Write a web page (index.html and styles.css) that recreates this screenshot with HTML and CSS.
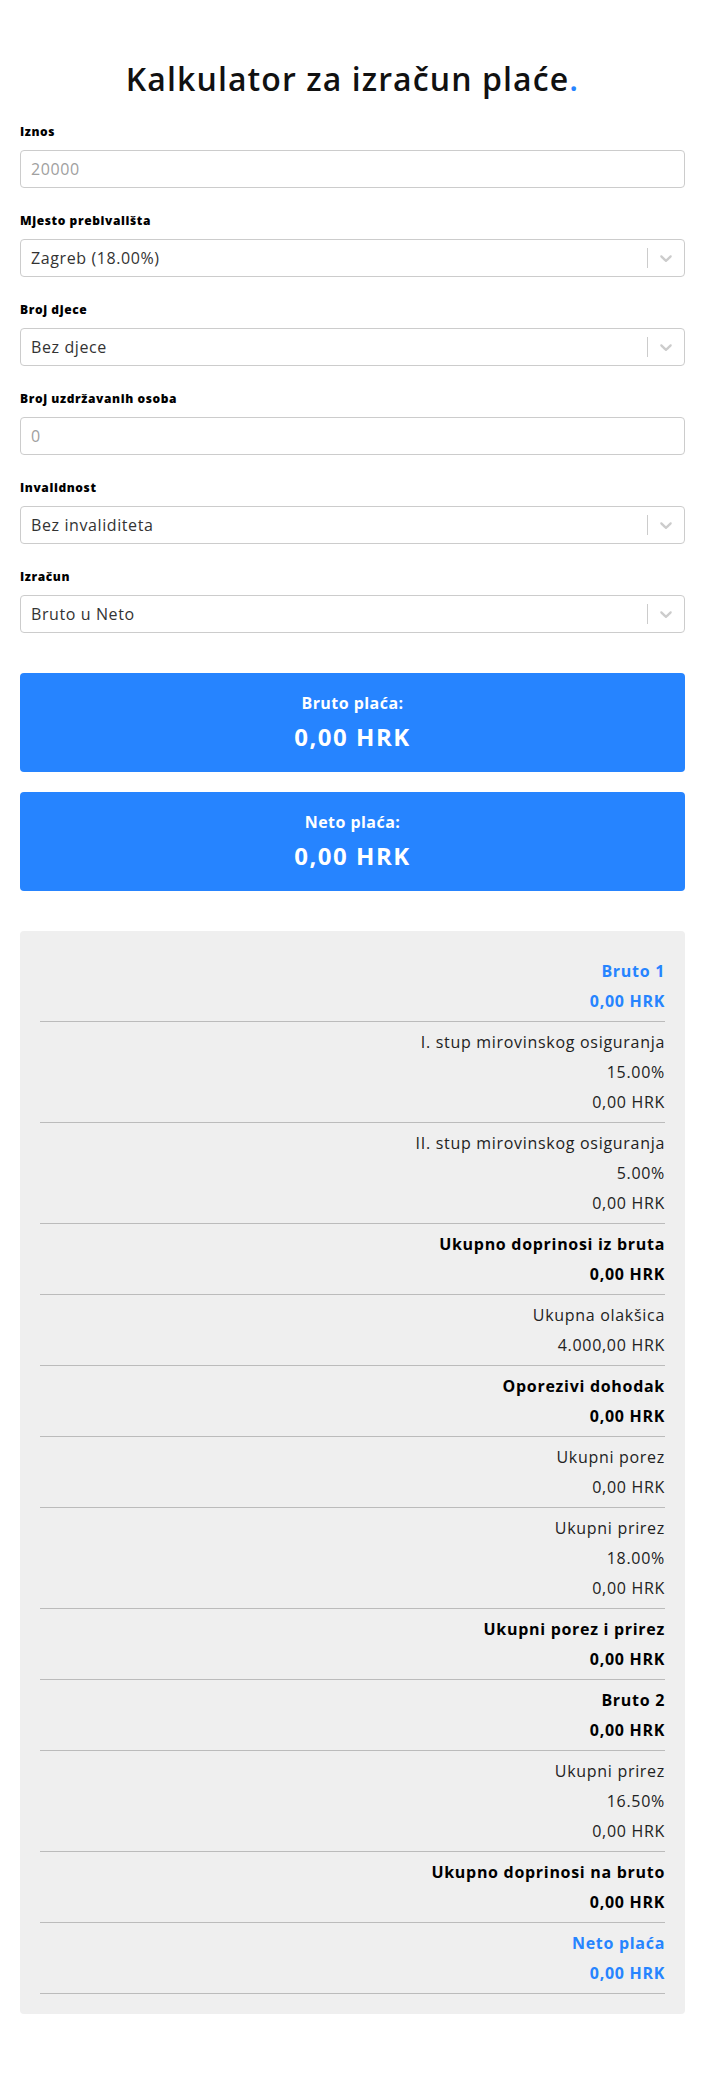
FILE: index.html
```html
<!DOCTYPE html>
<html lang="hr">
<head>
<meta charset="utf-8">
<title>Kalkulator za izračun plaće</title>
<link rel="stylesheet" href="styles.css">
</head>
<body>
<div class="page">
  <h1 class="title">Kalkulator za izračun plaće<span class="dot">.</span></h1>

  <div class="form">
    <div class="field">
      <div class="label">Iznos</div>
      <div class="control"><span class="placeholder">20000</span></div>
    </div>
    <div class="field">
      <div class="label">Mjesto prebivališta</div>
      <div class="control select">
        <span class="value">Zagreb (18.00%)</span>
        <span class="indicators"><span class="sep"></span><span class="chev"><svg viewBox="0 0 20 20" width="20" height="20"><path d="M4.516 7.548c0.436-0.446 1.043-0.481 1.576 0l3.908 3.747 3.908-3.747c0.533-0.481 1.141-0.446 1.574 0 0.436 0.445 0.408 1.197 0 1.615-0.406 0.418-4.695 4.502-4.695 4.502-0.217 0.223-0.502 0.335-0.787 0.335s-0.57-0.112-0.789-0.335c0 0-4.287-4.084-4.695-4.502s-0.436-1.17 0-1.615z"/></svg></span></span>
      </div>
    </div>
    <div class="field">
      <div class="label">Broj djece</div>
      <div class="control select">
        <span class="value">Bez djece</span>
        <span class="indicators"><span class="sep"></span><span class="chev"><svg viewBox="0 0 20 20" width="20" height="20"><path d="M4.516 7.548c0.436-0.446 1.043-0.481 1.576 0l3.908 3.747 3.908-3.747c0.533-0.481 1.141-0.446 1.574 0 0.436 0.445 0.408 1.197 0 1.615-0.406 0.418-4.695 4.502-4.695 4.502-0.217 0.223-0.502 0.335-0.787 0.335s-0.57-0.112-0.789-0.335c0 0-4.287-4.084-4.695-4.502s-0.436-1.17 0-1.615z"/></svg></span></span>
      </div>
    </div>
    <div class="field">
      <div class="label">Broj uzdržavanih osoba</div>
      <div class="control"><span class="placeholder">0</span></div>
    </div>
    <div class="field">
      <div class="label">Invalidnost</div>
      <div class="control select">
        <span class="value">Bez invaliditeta</span>
        <span class="indicators"><span class="sep"></span><span class="chev"><svg viewBox="0 0 20 20" width="20" height="20"><path d="M4.516 7.548c0.436-0.446 1.043-0.481 1.576 0l3.908 3.747 3.908-3.747c0.533-0.481 1.141-0.446 1.574 0 0.436 0.445 0.408 1.197 0 1.615-0.406 0.418-4.695 4.502-4.695 4.502-0.217 0.223-0.502 0.335-0.787 0.335s-0.57-0.112-0.789-0.335c0 0-4.287-4.084-4.695-4.502s-0.436-1.17 0-1.615z"/></svg></span></span>
      </div>
    </div>
    <div class="field">
      <div class="label">Izračun</div>
      <div class="control select">
        <span class="value">Bruto u Neto</span>
        <span class="indicators"><span class="sep"></span><span class="chev"><svg viewBox="0 0 20 20" width="20" height="20"><path d="M4.516 7.548c0.436-0.446 1.043-0.481 1.576 0l3.908 3.747 3.908-3.747c0.533-0.481 1.141-0.446 1.574 0 0.436 0.445 0.408 1.197 0 1.615-0.406 0.418-4.695 4.502-4.695 4.502-0.217 0.223-0.502 0.335-0.787 0.335s-0.57-0.112-0.789-0.335c0 0-4.287-4.084-4.695-4.502s-0.436-1.17 0-1.615z"/></svg></span></span>
      </div>
    </div>
  </div>

  <div class="results">
    <div class="result">
      <div class="result-label">Bruto plaća:</div>
      <div class="result-value">0,00 HRK</div>
    </div>
    <div class="result">
      <div class="result-label">Neto plaća:</div>
      <div class="result-value">0,00 HRK</div>
    </div>
  </div>

  <div class="breakdown">
    <div class="row accent"><p>Bruto 1</p><p>0,00 HRK</p></div>
    <div class="row"><p>I. stup mirovinskog osiguranja</p><p>15.00%</p><p>0,00 HRK</p></div>
    <div class="row"><p>II. stup mirovinskog osiguranja</p><p>5.00%</p><p>0,00 HRK</p></div>
    <div class="row strong"><p>Ukupno doprinosi iz bruta</p><p>0,00 HRK</p></div>
    <div class="row"><p>Ukupna olakšica</p><p>4.000,00 HRK</p></div>
    <div class="row strong"><p>Oporezivi dohodak</p><p>0,00 HRK</p></div>
    <div class="row"><p>Ukupni porez</p><p>0,00 HRK</p></div>
    <div class="row"><p>Ukupni prirez</p><p>18.00%</p><p>0,00 HRK</p></div>
    <div class="row strong"><p>Ukupni porez i prirez</p><p>0,00 HRK</p></div>
    <div class="row strong"><p>Bruto 2</p><p>0,00 HRK</p></div>
    <div class="row"><p>Ukupni prirez</p><p>16.50%</p><p>0,00 HRK</p></div>
    <div class="row strong"><p>Ukupno doprinosi na bruto</p><p>0,00 HRK</p></div>
    <div class="row accent"><p>Neto plaća</p><p>0,00 HRK</p></div>
  </div>
</div>
</body>
</html>
```
FILE: styles.css
```css
* { box-sizing: border-box; }

html, body {
  margin: 0;
  padding: 0;
  background: #fff;
}

body {
  font-family: "Open Sans", "Noto Sans", sans-serif;
  color: #000;
}

.page {
  padding: 59px 20px 60px;
}

.title {
  margin: 0;
  font-size: 32px;
  line-height: 40px;
  font-weight: 600;
  letter-spacing: 1.1px;
  text-align: center;
  color: #111;
}

.dot { color: #2684ff; }

.field { margin-top: 23px; }

.label {
  font-size: 12px;
  line-height: 20px;
  font-weight: 800;
  letter-spacing: 0.6px;
  margin-bottom: 8px;
}

.control {
  height: 38px;
  border: 1px solid #ccc;
  border-radius: 4px;
  background: #fff;
  display: flex;
  align-items: center;
  padding: 0 0 0 10px;
  font-size: 16px;
  font-weight: 400;
  letter-spacing: 0.6px;
}

.placeholder { color: #a0a0a0; }

.value {
  flex: 1;
  color: #333;
}

.indicators {
  display: flex;
  align-items: center;
  align-self: stretch;
}

.sep {
  width: 1px;
  height: 20px;
  background: #ccc;
}

.chev {
  display: flex;
  padding: 8px;
}

.chev svg { fill: #ccc; display: block; }

.results {
  margin-top: 40px;
  display: flex;
  flex-direction: column;
  gap: 20px;
}

.result {
  background: #2684ff;
  border-radius: 4px;
  color: #fff;
  text-align: center;
  padding: 20px 0;
}

.result-label {
  font-size: 16px;
  line-height: 20px;
  font-weight: 700;
  letter-spacing: 0.45px;
  margin-bottom: 9px;
}

.result-value {
  font-size: 24px;
  line-height: 30px;
  font-weight: 700;
  letter-spacing: 1.5px;
}

.breakdown {
  margin-top: 40px;
  background: #efefef;
  border-radius: 4px;
  padding: 20px;
}

.row {
  padding: 5px 0;
  border-bottom: 1px solid #bbb;
  text-align: right;
  font-size: 16px;
  line-height: 30px;
  font-weight: 400;
  letter-spacing: 0.7px;
  color: #222;
}

.row p { margin: 0; }

.row.strong { font-weight: 700; color: #000; }

.row.accent { font-weight: 700; color: #2684ff; }
```
